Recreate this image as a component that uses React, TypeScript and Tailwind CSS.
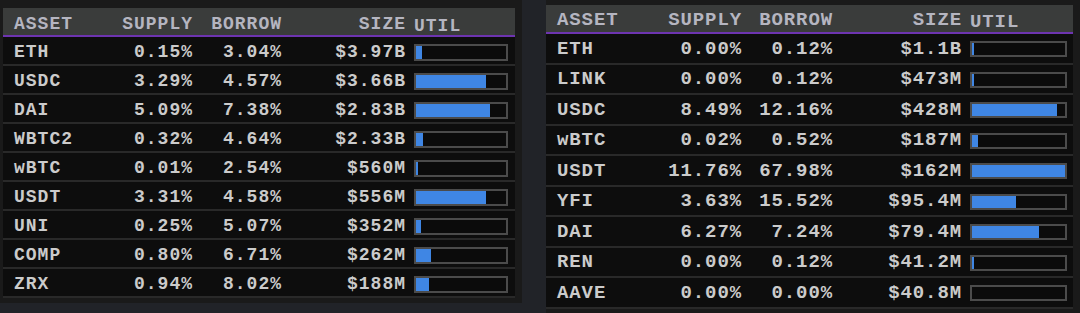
import React from 'react'

type Row = { asset: string; supply: string; borrow: string; size: string; util: number }

const leftRows: Row[] = [
    { asset: 'ETH', supply: '0.15%', borrow: '3.04%', size: '$3.97B', util: 7 },
    { asset: 'USDC', supply: '3.29%', borrow: '4.57%', size: '$3.66B', util: 78 },
    { asset: 'DAI', supply: '5.09%', borrow: '7.38%', size: '$2.83B', util: 82 },
    { asset: 'WBTC2', supply: '0.32%', borrow: '4.64%', size: '$2.33B', util: 8 },
    { asset: 'wBTC', supply: '0.01%', borrow: '2.54%', size: '$560M', util: 2 },
    { asset: 'USDT', supply: '3.31%', borrow: '4.58%', size: '$556M', util: 78 },
    { asset: 'UNI', supply: '0.25%', borrow: '5.07%', size: '$352M', util: 6 },
    { asset: 'COMP', supply: '0.80%', borrow: '6.71%', size: '$262M', util: 17 },
    { asset: 'ZRX', supply: '0.94%', borrow: '8.02%', size: '$188M', util: 14 },
]

const rightRows: Row[] = [
    { asset: 'ETH', supply: '0.00%', borrow: '0.12%', size: '$1.1B', util: 2 },
    { asset: 'LINK', supply: '0.00%', borrow: '0.12%', size: '$473M', util: 2 },
    { asset: 'USDC', supply: '8.49%', borrow: '12.16%', size: '$428M', util: 91 },
    { asset: 'wBTC', supply: '0.02%', borrow: '0.52%', size: '$187M', util: 6 },
    { asset: 'USDT', supply: '11.76%', borrow: '67.98%', size: '$162M', util: 100 },
    { asset: 'YFI', supply: '3.63%', borrow: '15.52%', size: '$95.4M', util: 47 },
    { asset: 'DAI', supply: '6.27%', borrow: '7.24%', size: '$79.4M', util: 72 },
    { asset: 'REN', supply: '0.00%', borrow: '0.12%', size: '$41.2M', util: 2 },
    { asset: 'AAVE', supply: '0.00%', borrow: '0.00%', size: '$40.8M', util: 0 },
]

// grid + sizing per panel (the two captures are at slightly different scales)
const leftCfg = {
    width: 'w-[512px]',
    grid: 'grid grid-cols-[89px_90px_89px_124px_102px] pl-[11px] pr-[7px]',
    text: 'text-[18px] tracking-[1px]',
    head: 'h-[29px] pt-[4px]',
    row: 'h-[29px] pt-[3px]',
    bar: 'h-[17px] ml-[8px]',
}

const rightCfg = {
    width: 'w-[527px]',
    grid: 'grid grid-cols-[94px_91px_91px_129px_105px] pl-[11px] pr-[6px]',
    text: 'text-[19px] tracking-[0.9px]',
    head: 'h-[29px] pt-[3px]',
    row: 'h-[30.5px] pt-[2px]',
    bar: 'h-[16px] ml-[8px]',
}

const UtilBar = ({ pct, cls }: { pct: number; cls: string }) => (
    <div className={`${cls} border-2 border-[#4b4b4b] bg-[#0b0b0b]`}>
        <div className="h-full bg-[#3f86e4]" style={{ width: `${pct}%` }} />
    </div>
)

const Panel = ({ rows, cfg }: { rows: Row[]; cfg: typeof leftCfg }) => {
    return (
        <div className={`${cfg.width} ${cfg.text} font-['Liberation_Mono',monospace] font-bold leading-none`}>
            <div className={`${cfg.grid} ${cfg.head} items-center bg-[#3a3c3b] text-[#b5b5c0] border-b-2 border-[#6d34b0]`}>
                <span>ASSET</span>
                <span className="text-right">SUPPLY</span>
                <span className="text-right">BORROW</span>
                <span className="text-right">SIZE</span>
                <span className="pl-[8px] pt-[5px]">UTIL</span>
            </div>
            {rows.map((r) => (
                <div
                    key={r.asset + r.size}
                    className={`${cfg.grid} ${cfg.row} items-center bg-[#0d0d0d] text-[#cbcbcb] border-b-2 border-[#292929]`}
                >
                    <span>{r.asset}</span>
                    <span className="text-right">{r.supply}</span>
                    <span className="text-right">{r.borrow}</span>
                    <span className="text-right">{r.size}</span>
                    <UtilBar pct={r.util} cls={cfg.bar} />
                </div>
            ))}
        </div>
    )
}

const App = () => {
    return (
        <div className="flex w-[1080px] h-[313px] bg-[#212328] overflow-hidden">
            <div className="w-[522px] h-[303px] bg-[#1a1a1a] pl-[3px] pt-[8px]">
                <Panel rows={leftRows} cfg={leftCfg} />
            </div>
            <div className="ml-[24px] flex-1 h-full bg-[#1a1a1a] pt-[5px]">
                <Panel rows={rightRows} cfg={rightCfg} />
            </div>
        </div>
    )
}

export default App
